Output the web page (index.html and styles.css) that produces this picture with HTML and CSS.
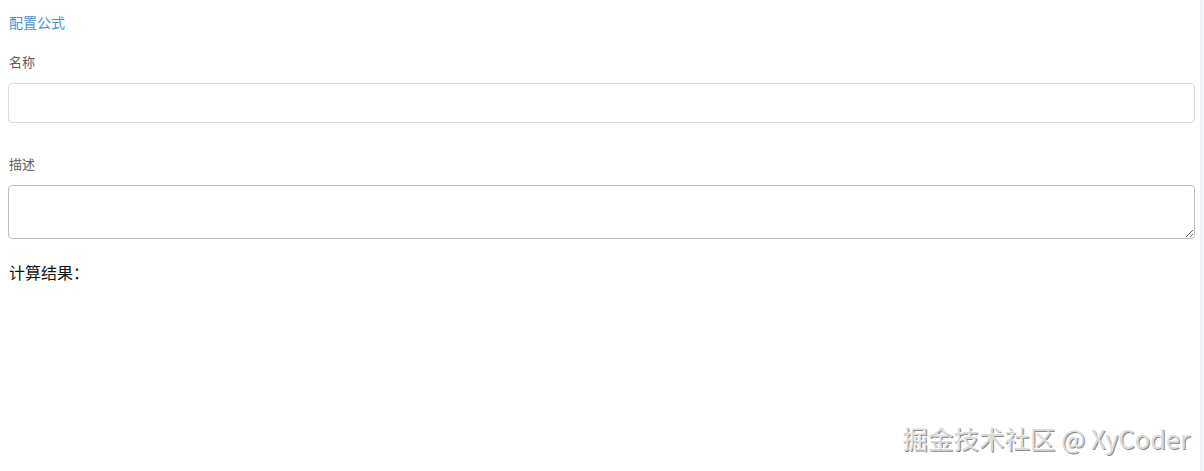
FILE: index.html
```html
<!DOCTYPE html>
<html lang="zh">
<head>
<meta charset="utf-8">
<title>配置公式</title>
<link rel="stylesheet" href="styles.css">
</head>
<body>
<div class="page">
  <main class="panel">
    <div class="title">配置公式</div>
    <div class="field">
      <label class="label">名称</label>
      <input class="input" type="text">
    </div>
    <div class="field field-desc">
      <label class="label">描述</label>
      <textarea class="textarea"></textarea>
    </div>
    <div class="result">计算结果：</div>
  </main>
  <aside class="edge"></aside>
</div>
<div class="watermark">掘金技术社区 @ XyCoder</div>
</body>
</html>
```
FILE: styles.css
```css
html, body {
  margin: 0;
  padding: 0;
  background: #fff;
  font-family: "Noto Sans CJK SC", "Noto Sans", sans-serif;
}
.page {
  display: flex;
  height: 471px;
}
.panel {
  flex: 1;
  padding: 12px 5px 0 8px;
  box-sizing: border-box;
}
.edge {
  width: 4px;
  background: #f3f6f9;
  border-left: 1px solid #e6ebf0;
  box-sizing: border-box;
}
.title {
  font-size: 14px;
  line-height: 20px;
  color: #4a90d9;
  padding-left: 1px;
}
.field {
  margin-top: 20px;
  display: flex;
  flex-direction: column;
}
.field-desc {
  margin-top: 31px;
}
.label {
  font-size: 13px;
  line-height: 20px;
  color: #5f5f5f;
  padding-left: 1px;
  margin-bottom: 11px;
}
.input {
  height: 40px;
  box-sizing: border-box;
  border: 1px solid #dcdcdc;
  border-radius: 4px;
  outline: none;
  margin: 0;
}
.textarea {
  height: 54px;
  box-sizing: border-box;
  border: 1px solid #bdbdbd;
  border-radius: 4px;
  outline: none;
  margin: 0;
  resize: both;
}
.result {
  margin-top: 22px;
  font-size: 16px;
  line-height: 22px;
  color: #111;
  padding-left: 1px;
}
.watermark {
  position: absolute;
  right: 14px;
  top: 421px;
  font-size: 25.5px;
  line-height: 34px;
  color: #dadada;
  text-shadow: -1px -1px 0 #fff, 1px 1px 0 #8a8a8a;
  white-space: nowrap;
}
```
